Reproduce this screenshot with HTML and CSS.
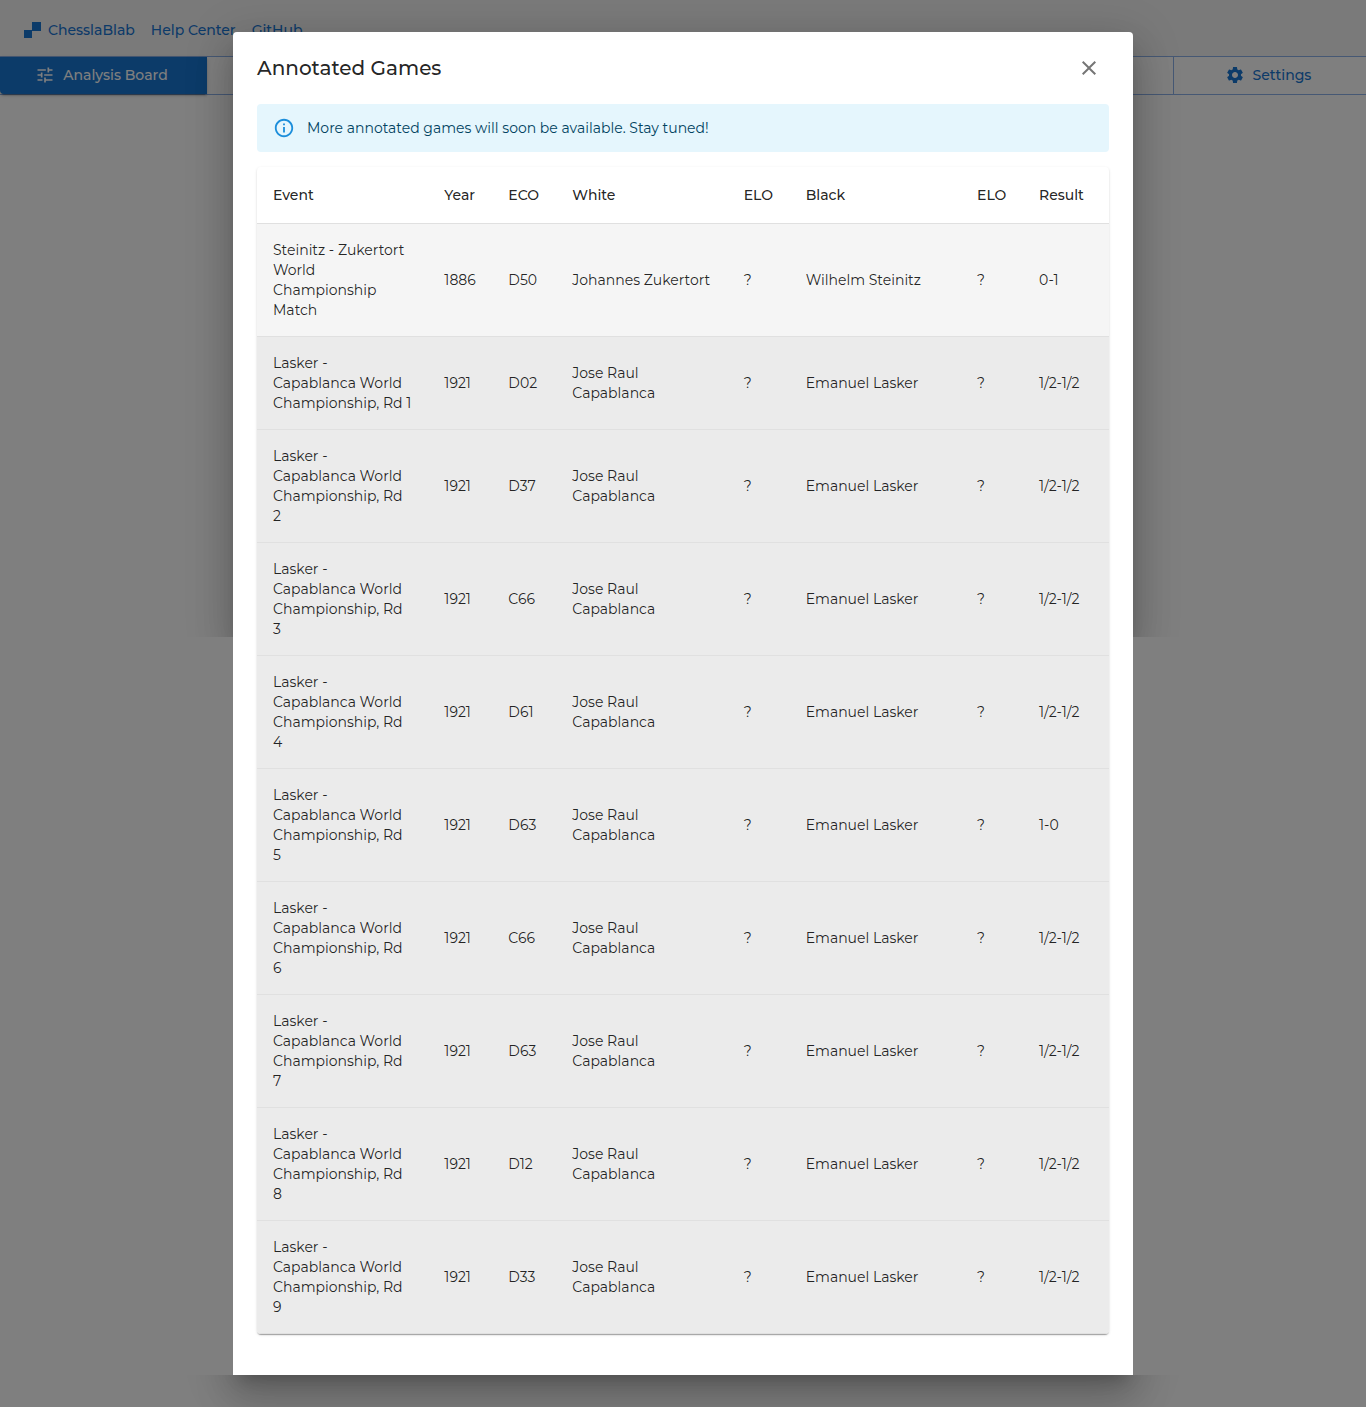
FILE: index.html
```html
<!DOCTYPE html>
<html lang="en">
<head>
<meta charset="utf-8">
<meta name="viewport" content="width=device-width, initial-scale=1">
<title>ChesslaBlab</title>
<link rel="stylesheet" href="styles.css">
</head>
<body>
<header class="topbar">
  <a class="brand" href="#">
    <svg class="brand-logo" viewBox="0 0 17 16" aria-hidden="true"><path d="M8 0h9v9H8zM0 8h8v8H0z"/></svg>
    <span>ChesslaBlab</span>
  </a>
  <a href="#">Help Center</a>
  <a href="#">GitHub</a>
</header>
<nav class="modes">
  <button class="mode mode-active" type="button">
    <svg class="mode-icon" viewBox="0 0 24 24" aria-hidden="true"><path d="M3 17v2h6v-2H3zM3 5v2h10V5H3zm10 16v-2h8v-2h-8v-2h-2v6h2zM7 9v2H3v2h4v2h2V9H7zm14 4v-2H11v2h10zm-6-4h2V7h4V5h-4V3h-2v6z"/></svg>
    <span>Analysis Board</span>
  </button>
  <button class="mode mode-settings" type="button">
    <svg class="mode-icon" viewBox="0 0 24 24" aria-hidden="true"><path d="M19.14 12.94c.04-.3.06-.61.06-.94 0-.32-.02-.64-.07-.94l2.03-1.58c.18-.14.23-.41.12-.61l-1.92-3.32c-.12-.22-.37-.29-.59-.22l-2.39.96c-.5-.38-1.03-.7-1.62-.94l-.36-2.54c-.04-.24-.24-.41-.48-.41h-3.84c-.24 0-.43.17-.47.41l-.36 2.54c-.59.24-1.13.57-1.62.94l-2.39-.96c-.22-.08-.47 0-.59.22L2.74 8.87c-.12.21-.08.47.12.61l2.03 1.58c-.05.3-.09.63-.09.94s.02.64.07.94l-2.03 1.58c-.18.14-.23.41-.12.61l1.92 3.32c.12.22.37.29.59.22l2.39-.96c.5.38 1.03.7 1.62.94l.36 2.54c.05.24.24.41.48.41h3.84c.24 0 .44-.17.47-.41l.36-2.54c.59-.24 1.13-.56 1.62-.94l2.39.96c.22.08.47 0 .59-.22l1.92-3.32c.12-.22.07-.47-.12-.61l-2.01-1.58zM12 15.6c-1.98 0-3.6-1.62-3.6-3.6s1.62-3.6 3.6-3.6 3.6 1.62 3.6 3.6-1.62 3.6-3.6 3.6z"/></svg>
    <span>Settings</span>
  </button>
</nav>

<div class="backdrop">
  <main class="dialog" role="dialog" aria-modal="true" aria-labelledby="dialog-title">
    <div class="dialog-head">
      <h2 id="dialog-title">Annotated Games</h2>
      <button class="close" type="button" aria-label="Close">
        <svg viewBox="0 0 24 24" aria-hidden="true"><path d="M19 6.41 17.59 5 12 10.59 6.41 5 5 6.41 10.59 12 5 17.59 6.41 19 12 13.41 17.59 19 19 17.59 13.41 12z"/></svg>
      </button>
    </div>
    <div class="notice" role="alert">
      <svg viewBox="0 0 24 24" aria-hidden="true"><path d="M11 7h2v2h-2zm0 4h2v6h-2zm1-9C6.48 2 2 6.48 2 12s4.480 10 10 10 10-4.480 10-10S17.520 2 12 2zm0 18c-4.410 0-8-3.590-8-8s3.590-8 8-8 8 3.590 8 8-3.590 8-8 8z"/></svg>
      <span>More annotated games will soon be available. Stay tuned!</span>
    </div>
    <table class="games">
      <colgroup>
        <col><col class="col-code"><col class="col-code"><col><col class="col-elo"><col><col class="col-elo"><col class="col-result">
      </colgroup>
      <thead>
        <tr><th>Event</th><th>Year</th><th>ECO</th><th>White</th><th>ELO</th><th>Black</th><th>ELO</th><th>Result</th></tr>
      </thead>
      <tbody>
        <tr class="row-hover"><td>Steinitz - Zukertort World Championship Match</td><td>1886</td><td>D50</td><td>Johannes Zukertort</td><td>?</td><td>Wilhelm Steinitz</td><td>?</td><td>0-1</td></tr>
        <tr><td>Lasker - Capablanca World Championship, Rd 1</td><td>1921</td><td>D02</td><td>Jose Raul Capablanca</td><td>?</td><td>Emanuel Lasker</td><td>?</td><td>1/2-1/2</td></tr>
        <tr><td>Lasker - Capablanca World Championship, Rd 2</td><td>1921</td><td>D37</td><td>Jose Raul Capablanca</td><td>?</td><td>Emanuel Lasker</td><td>?</td><td>1/2-1/2</td></tr>
        <tr><td>Lasker - Capablanca World Championship, Rd 3</td><td>1921</td><td>C66</td><td>Jose Raul Capablanca</td><td>?</td><td>Emanuel Lasker</td><td>?</td><td>1/2-1/2</td></tr>
        <tr><td>Lasker - Capablanca World Championship, Rd 4</td><td>1921</td><td>D61</td><td>Jose Raul Capablanca</td><td>?</td><td>Emanuel Lasker</td><td>?</td><td>1/2-1/2</td></tr>
        <tr><td>Lasker - Capablanca World Championship, Rd 5</td><td>1921</td><td>D63</td><td>Jose Raul Capablanca</td><td>?</td><td>Emanuel Lasker</td><td>?</td><td>1-0</td></tr>
        <tr><td>Lasker - Capablanca World Championship, Rd 6</td><td>1921</td><td>C66</td><td>Jose Raul Capablanca</td><td>?</td><td>Emanuel Lasker</td><td>?</td><td>1/2-1/2</td></tr>
        <tr><td>Lasker - Capablanca World Championship, Rd 7</td><td>1921</td><td>D63</td><td>Jose Raul Capablanca</td><td>?</td><td>Emanuel Lasker</td><td>?</td><td>1/2-1/2</td></tr>
        <tr><td>Lasker - Capablanca World Championship, Rd 8</td><td>1921</td><td>D12</td><td>Jose Raul Capablanca</td><td>?</td><td>Emanuel Lasker</td><td>?</td><td>1/2-1/2</td></tr>
        <tr><td>Lasker - Capablanca World Championship, Rd 9</td><td>1921</td><td>D33</td><td>Jose Raul Capablanca</td><td>?</td><td>Emanuel Lasker</td><td>?</td><td>1/2-1/2</td></tr>
      </tbody>
    </table>
  </main>
</div>
</body>
</html>
```
FILE: styles.css
```css
* { box-sizing: border-box; }

body {
  margin: 0;
  min-height: 100vh;
  background: #fff;
  color: rgba(0, 0, 0, .87);
  font: 400 14px/20px Montserrat, Inter, sans-serif;
}

button {
  border: 0;
  background: none;
  font: inherit;
  cursor: pointer;
}

svg { fill: currentColor; }

/* Top bar */
.topbar {
  display: flex;
  align-items: center;
  gap: 16px;
  height: 56px;
  padding: 4px 24px 0;
  background: #f5f5f5;
  font-weight: 500;
}
.topbar a {
  color: #1976d2;
  text-decoration: none;
}
.topbar .brand {
  display: flex;
  align-items: center;
  gap: 7px;
}
.brand-logo {
  width: 17px;
  height: 16px;
}

/* Mode buttons */
.modes {
  display: flex;
  justify-content: space-between;
  height: 39px;
  border: solid #8cb0e8;
  border-width: 1px 0;
}
.mode {
  display: flex;
  align-items: center;
  justify-content: center;
  gap: 8px;
  padding: 0 4px 2px 0;
  color: #1976d2;
  font-weight: 500;
}
.mode-icon {
  width: 20px;
  height: 20px;
}
.mode-active {
  width: 207px;
  border-radius: 0 0 0 4px;
  background: #1976d2;
  color: #fff;
  box-shadow: 0 3px 1px -2px rgba(0, 0, 0, .2), 0 2px 2px rgba(0, 0, 0, .14), 0 1px 5px rgba(0, 0, 0, .12);
}
.mode-settings {
  width: 193px;
  border-left: 1px solid #8cb0e8;
}

/* Dialog */
.backdrop {
  position: absolute;
  z-index: 10;
  top: 0;
  left: 0;
  display: flex;
  justify-content: center;
  width: 100%;
  min-height: 100vh;
  padding: 32px;
  background: rgba(0, 0, 0, .5);
}
.dialog {
  position: relative;
  width: 100%;
  max-width: 900px;
  padding: 0 24px 40px;
  border-radius: 4px 4px 0 0;
  background: #fff;
}

/* Shadow along the upper part and under the lower edge */
.dialog::before,
.dialog::after {
  content: "";
  position: absolute;
  z-index: -1;
  left: 0;
  width: 100%;
  height: 605px;
  border-radius: 4px;
  box-shadow: 0 11px 15px -7px rgba(0, 0, 0, .2), 0 24px 38px 3px rgba(0, 0, 0, .14), 0 9px 46px 8px rgba(0, 0, 0, .12);
}
.dialog::before {
  top: 0;
  clip-path: inset(-80px -80px 0 -80px);
}
.dialog::after {
  bottom: 0;
  clip-path: inset(100% -80px -80px -80px);
}

.dialog-head {
  display: flex;
  align-items: center;
  justify-content: space-between;
  height: 72px;
}
.dialog-head h2 {
  margin: 0;
  font-size: 20px;
  font-weight: 500;
  line-height: 32px;
}
.close {
  display: grid;
  place-items: center;
  width: 40px;
  height: 40px;
  padding: 0;
  color: rgba(0, 0, 0, .54);
}
.close svg {
  width: 24px;
  height: 24px;
}

.notice {
  display: flex;
  align-items: center;
  gap: 12px;
  min-height: 48px;
  margin-bottom: 15px;
  padding: 6px 16px;
  border-radius: 4px;
  background: #e5f6fd;
  color: #014361;
}
.notice svg {
  width: 22px;
  height: 22px;
  color: #1c8edb;
}

/* Games table */
.games {
  width: 100%;
  table-layout: fixed;
  border-spacing: 0;
  border-radius: 4px;
  overflow: hidden;
  box-shadow: 0 2px 1px -1px rgba(0, 0, 0, .2), 0 1px 1px rgba(0, 0, 0, .14), 0 1px 3px rgba(0, 0, 0, .12);
}
.col-code { width: 64px; }
.col-elo { width: 62px; }
.col-result { width: 86px; }
.games th,
.games td {
  padding: 16px;
  border-bottom: 1px solid #e0e0e0;
  text-align: left;
}
.games th {
  font-weight: 500;
  line-height: 24px;
}
.games td { background: #ebebeb; }
.games .row-hover td { background: #f5f5f5; }
```
